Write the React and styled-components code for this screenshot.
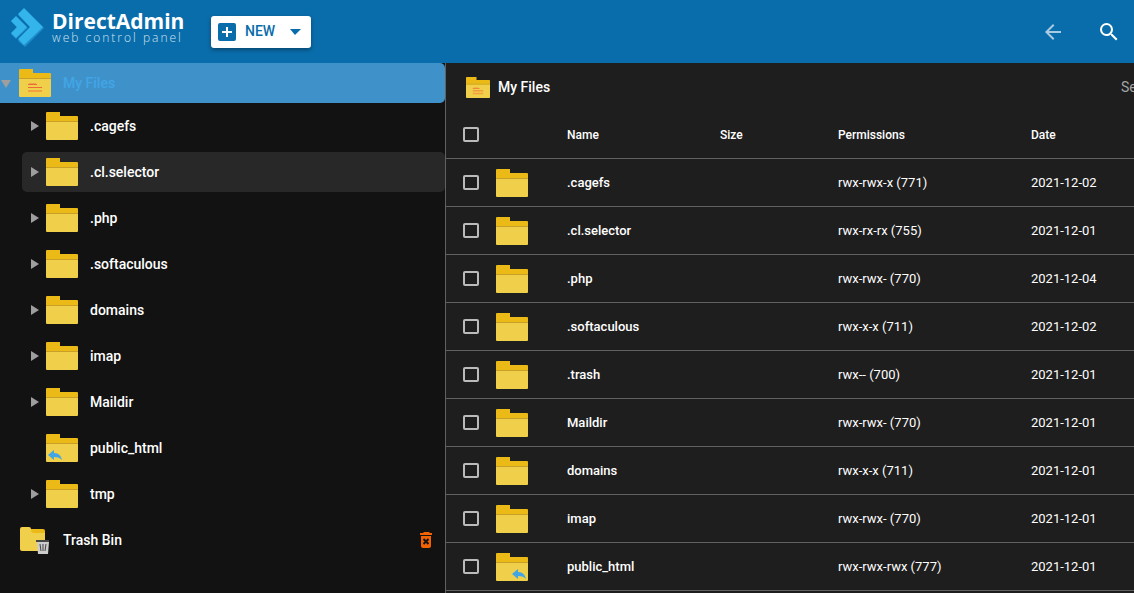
import styled, { createGlobalStyle } from "styled-components";

const GlobalStyle = createGlobalStyle`
  * {
    box-sizing: border-box;
  }
  html,
  body,
  #root {
    height: 100%;
  }
  body {
    margin: 0;
    overflow: hidden;
    background-color: #121212;
    color: #ffffff;
    font-family: Roboto, "Liberation Sans", sans-serif;
  }
  button {
    border: none;
    background: none;
    padding: 0;
    font-family: inherit;
    cursor: pointer;
  }
  svg {
    display: block;
  }
`;

const Page = styled.div`
  display: flex;
  flex-direction: column;
  height: 100%;
`;

const Header = styled.header`
  display: flex;
  align-items: center;
  flex: 0 0 63px;
  padding: 0 13px 0 10px;
  background-color: #0a6dab;
`;

const Logo = styled.a`
  display: flex;
  align-items: center;
  gap: 8px;
  width: 175px;
  color: #ffffff;
  text-decoration: none;
  white-space: nowrap;
  padding-bottom: 8px;

  & .brand {
    display: block;
    font-family: "Open Sans", "Noto Sans", sans-serif;
    font-size: 21px;
    font-weight: 700;
    line-height: 20px;
  }
  & .tagline {
    display: block;
    font-family: "Open Sans", "Noto Sans", sans-serif;
    font-size: 12px;
    font-weight: 300;
    line-height: 14px;
    letter-spacing: 2px;
    color: #cfe3f0;
  }
`;

const NewButton = styled.button`
  display: flex;
  align-items: center;
  width: 100px;
  height: 32px;
  margin-left: 26px;
  padding: 0 10px 0 7px;
  border-radius: 3px;
  background-color: #ffffff;
  color: #0a6dab;
  font-size: 14px;
  font-weight: 500;
  box-shadow: 0 2px 4px rgba(0, 0, 0, 0.35);

  & .label {
    margin-left: 9px;
    margin-right: auto;
    padding-bottom: 1px;
  }
`;

const HeaderActions = styled.div`
  display: flex;
  align-items: center;
  gap: 32px;
  margin-left: auto;
`;

const IconButton = styled.button`
  color: ${({ $color }) => $color};
`;

const Content = styled.div`
  display: flex;
  flex: 1;
  min-height: 0;
`;

const Sidebar = styled.nav`
  flex: 0 0 446px;
  border-right: 1px solid #616161;
  background-color: #121212;
`;

const Tree = styled.ul`
  display: flex;
  flex-direction: column;
  gap: 6px;
  margin: 3px 0 6px;
  padding: 0 0 0 22px;
  list-style: none;
`;

const TreeRow = styled.div`
  display: flex;
  align-items: center;
  height: 40px;
  padding-left: ${({ $root }) => ($root ? "1px" : "8px")};
  padding-right: 12px;
  border-radius: ${({ $root }) => ($root ? "0 5px 5px 0" : "5px")};
  background-color: ${({ $state }) =>
    $state === "active"
      ? "#3f92c9"
      : $state === "hover"
        ? "#282828"
        : "transparent"};
  color: ${({ $state }) => ($state === "active" ? "#42a5e6" : "#ffffff")};
  font-size: 14px;
  font-weight: 500;

  & .arrow {
    display: flex;
    justify-content: ${({ $root }) => ($root ? "flex-start" : "center")};
    width: ${({ $root }) => ($root ? "18px" : "9px")};
    margin-right: ${({ $root }) => ($root ? "0" : "7px")};
  }
  & .name {
    margin-left: 12px;
    margin-right: auto;
  }
`;

const Main = styled.main`
  flex: 1;
  min-width: 0;
  overflow: hidden;
  background-color: #1e1e1e;
`;

const TitleBar = styled.div`
  display: flex;
  align-items: center;
  height: 48px;
  padding-left: 20px;

  & h1 {
    margin: 0 auto 0 8px;
    font-size: 14px;
    font-weight: 500;
  }
  & .selection {
    width: 13px;
    overflow: hidden;
    color: #a5a5a5;
    font-size: 14px;
  }
`;

const Table = styled.table`
  width: 100%;
  table-layout: fixed;
  border-collapse: separate;
  border-spacing: 0;
  font-size: 13px;

  & th,
  td {
    height: 48px;
    padding: 0;
    border-bottom: 1px solid #616161;
    text-align: left;
    font-weight: 400;
    white-space: nowrap;
  }
  & thead th {
    font-size: 12px;
    font-weight: 500;
  }
  & tbody th {
    font-weight: 500;
  }
  & .check {
    padding-left: 17px;
    padding-bottom: 1px;
  }
`;

const Col = styled.col`
  width: ${({ $width }) => $width};
`;

const Checkbox = styled.input`
  display: block;
  appearance: none;
  width: 16px;
  height: 15px;
  margin: 0;
  border: 2px solid #bbbbbb;
  border-radius: 2px;
  cursor: pointer;

  &:checked {
    background-color: #42a5e6;
  }
`;

const treeItems = [
  { name: ".cagefs" },
  { name: ".cl.selector", state: "hover" },
  { name: ".php" },
  { name: ".softaculous" },
  { name: "domains" },
  { name: "imap" },
  { name: "Maildir" },
  { name: "public_html", link: true },
  { name: "tmp" },
];

const files = [
  { name: ".cagefs", permissions: "rwx-rwx-x (771)", date: "2021-12-02" },
  { name: ".cl.selector", permissions: "rwx-rx-rx (755)", date: "2021-12-01" },
  { name: ".php", permissions: "rwx-rwx- (770)", date: "2021-12-04" },
  { name: ".softaculous", permissions: "rwx-x-x (711)", date: "2021-12-02" },
  { name: ".trash", permissions: "rwx-- (700)", date: "2021-12-01" },
  { name: "Maildir", permissions: "rwx-rwx- (770)", date: "2021-12-01" },
  { name: "domains", permissions: "rwx-x-x (711)", date: "2021-12-01" },
  { name: "imap", permissions: "rwx-rwx- (770)", date: "2021-12-01" },
  {
    name: "public_html",
    permissions: "rwx-rwx-rwx (777)",
    date: "2021-12-01",
    link: true,
  },
];

function LogoMark() {
  return (
    <svg width="34" height="40" viewBox="0 0 34 40">
      <path d="M14 2 34 20 15 39 8 33 21 20 8 7Z" fill="#1e8dc9" />
      <path d="M6 9 18 20 6 31 1 26 7 20 1 13Z" fill="#1e8dc9" />
      <path d="M14 0 33 19 14 37 8 31 20 19 8 6Z" fill="#33b5ec" />
      <path d="M6 8 17 19 6 30 1 25 7 19 1 13Z" fill="#33b5ec" />
    </svg>
  );
}

function FolderIcon({ width = 32, height = 28, lines, shortcut }) {
  return (
    <svg width={width} height={height} viewBox="0 0 32 28">
      <path d="M0 1q0-1 1-1h13v4h17q1 0 1 1v6H0Z" fill="#ebba16" />
      <path d="M0 10h32v17q0 1-1 1H1q-1 0-1-1Z" fill="#f0cf4a" />
      <path d="M0 9h32v1H0Z" fill="#c9a027" />
      {lines && (
        <>
          <path d="M9 15h9v1H9zM9 18h14v1H9z" fill="#ee6a38" />
          <path d="M10 14h7v1h-7zM9 21h14v2H9z" fill="#f2a040" />
        </>
      )}
      {shortcut && (
        <path
          transform={shortcut === "left" ? "translate(2 16)" : "translate(16 16)"}
          d="M0 5 6 0v3c5 0 7 3 8 7-2-2-4-3-8-3v3Z"
          fill="#42a5e6"
        />
      )}
    </svg>
  );
}

function TrashFolderIcon() {
  return (
    <svg width="32" height="28" viewBox="-1 0 32 28">
      <path d="M1 3h22q2 0 2 2v8H1Z" fill="#ebba16" />
      <path
        d="M0 3q0-2 2-2h7q2 0 2 2v1q0 2 2 3h12v16q0 2-2 2H2q-2 0-2-2Z"
        fill="#f0cf4a"
      />
      <path d="M16 14h13v2H16z" fill="#444444" />
      <path d="M17 16h12l-1 12H18z" fill="#cccccc" />
      <path d="M20 18l1 7M23 18v7M26 18l-1 7" stroke="#444444" />
    </svg>
  );
}

function DeleteIcon() {
  return (
    <svg width="14" height="16" viewBox="0 0 14 16">
      <path d="M5 0h5l1 1h2v2H1V1h3z" fill="#f26202" />
      <path d="M2 4h10v10q0 2-2 2H4q-2 0-2-2Z" fill="#f26202" />
      <path d="M4.500 7l5 5M9.500 7l-5 5" stroke="#121212" strokeWidth="2" />
    </svg>
  );
}

function Arrow({ open }) {
  return open ? (
    <svg width="11" height="9" viewBox="0 0 11 9">
      <path d="M0 1h10L5 9Z" fill="#9e9e9e" />
    </svg>
  ) : (
    <svg width="9" height="10" viewBox="0 0 9 10">
      <path d="M1 0v10l8-5Z" fill="#9e9e9e" />
    </svg>
  );
}

function AppHeader() {
  return (
    <Header>
      <Logo href="#">
        <LogoMark />
        <span>
          <span className="brand">DirectAdmin</span>
          <span className="tagline">web control panel</span>
        </span>
      </Logo>
      <NewButton type="button">
        <svg width="18" height="18" viewBox="0 0 18 18">
          <rect width="18" height="18" rx="2" fill="#0a6dab" />
          <path d="M9 4v10M4 9h10" stroke="#ffffff" strokeWidth="2" />
        </svg>
        <span className="label">NEW</span>
        <svg width="11" height="6" viewBox="0 0 11 6">
          <path d="M0 0h11L5 6Z" fill="#0a6dab" />
        </svg>
      </NewButton>
      <HeaderActions>
        <IconButton type="button" aria-label="Back" $color="#a7cbe2">
          <svg width="24" height="24" viewBox="0 0 24 24" fill="currentColor">
            <path d="M20 11H7.830l5.590-5.590L12 4l-8 8 8 8 1.410-1.410L7.830 13H20v-2z" />
          </svg>
        </IconButton>
        <IconButton type="button" aria-label="Search" $color="#ffffff">
          <svg width="24" height="24" viewBox="0 0 24 24" fill="currentColor">
            <path d="M15.500 14h-.79l-.28-.27A6.471 6.471 0 0 0 16 9.500 6.500 6.500 0 1 0 9.500 16c1.610 0 3.090-.59 4.230-1.570l.27.28v.79l5 4.990L20.490 19l-4.990-5zm-6 0C7.010 14 5 11.990 5 9.500S7.010 5 9.500 5 14 7.010 14 9.500 11.990 14 9.500 14z" />
          </svg>
        </IconButton>
      </HeaderActions>
    </Header>
  );
}

function FileTree() {
  return (
    <Sidebar>
      <TreeRow $root $state="active">
        <button className="arrow" type="button" aria-label="Collapse My Files">
          <Arrow open />
        </button>
        <FolderIcon lines />
        <span className="name">My Files</span>
      </TreeRow>
      <Tree>
        {treeItems.map((item) => (
          <li key={item.name}>
            <TreeRow $state={item.state}>
              {item.link ? (
                <span className="arrow" />
              ) : (
                <button
                  className="arrow"
                  type="button"
                  aria-label={`Expand ${item.name}`}
                >
                  <Arrow />
                </button>
              )}
              <FolderIcon shortcut={item.link && "left"} />
              <span className="name">{item.name}</span>
            </TreeRow>
          </li>
        ))}
      </Tree>
      <TreeRow $root>
        <span className="arrow" />
        <TrashFolderIcon />
        <span className="name">Trash Bin</span>
        <IconButton type="button" aria-label="Empty trash">
          <DeleteIcon />
        </IconButton>
      </TreeRow>
    </Sidebar>
  );
}

function FileTable() {
  return (
    <Table>
      <colgroup>
        <Col $width="50px" />
        <Col $width="71px" />
        <Col $width="153px" />
        <Col $width="118px" />
        <Col $width="193px" />
        <Col $width="auto" />
      </colgroup>
      <thead>
        <tr>
          <th className="check">
            <Checkbox type="checkbox" aria-label="Select all" />
          </th>
          <th />
          <th>Name</th>
          <th>Size</th>
          <th>Permissions</th>
          <th>Date</th>
        </tr>
      </thead>
      <tbody>
        {files.map((file) => (
          <tr key={file.name}>
            <td className="check">
              <Checkbox type="checkbox" aria-label={`Select ${file.name}`} />
            </td>
            <td>
              <FolderIcon shortcut={file.link && "right"} />
            </td>
            <th scope="row">{file.name}</th>
            <td />
            <td>{file.permissions}</td>
            <td>{file.date}</td>
          </tr>
        ))}
      </tbody>
    </Table>
  );
}

export default function App() {
  return (
    <>
      <GlobalStyle />
      <Page>
        <AppHeader />
        <Content>
          <FileTree />
          <Main>
            <TitleBar>
              <FolderIcon width={24} height={21} lines />
              <h1>My Files</h1>
              <span className="selection">Se</span>
            </TitleBar>
            <FileTable />
          </Main>
        </Content>
      </Page>
    </>
  );
}
